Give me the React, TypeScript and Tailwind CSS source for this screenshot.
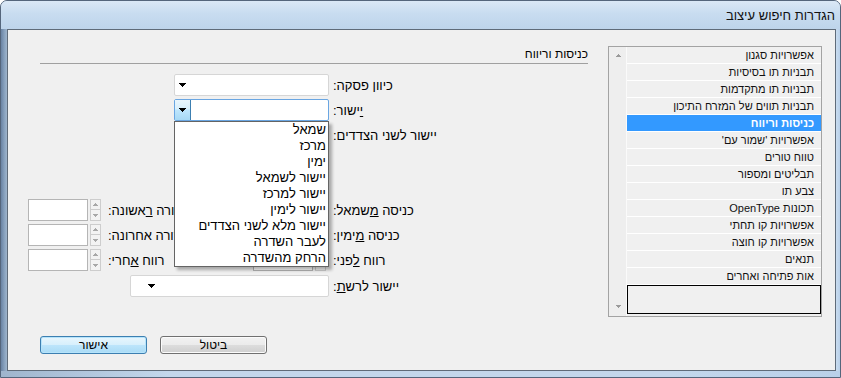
import React from "react";

function Arrow({ color = "#000" }: { color?: string }) {
  return (
    <svg width="7" height="4" viewBox="0 0 7 4" shapeRendering="crispEdges">
      <path d="M0 0h7v1H6v1H5v1H4v1H3V3H2V2H1V1H0z" fill={color} />
    </svg>
  );
}

function TinyArrow({ up = false, color = "#a8a8a8" }: { up?: boolean; color?: string }) {
  return (
    <svg width="5" height="3" viewBox="0 0 5 3" shapeRendering="crispEdges">
      {up ? (
        <path d="M2 0h1v1h1v1h1v1H0V2h1V1h1z" fill={color} />
      ) : (
        <path d="M0 0h5v1H4v1H3v1H2V2H1V1H0z" fill={color} />
      )}
    </svg>
  );
}

function Combo({ w, arrowPad = 4 }: { w: string; arrowPad?: number }) {
  return (
    <div
      className={`${w} h-[22px] shrink-0 border border-[#d6d6d6] rounded-[2px] bg-white flex items-center`}
    >
      <div className={arrowPad === 4 ? "pl-[4px] flex" : "pl-[17px] flex"}>
        <Arrow />
      </div>
    </div>
  );
}

function Spin() {
  return (
    <div className="w-[11px] h-[22px] shrink-0 flex flex-col">
      <div className="h-[11px] border border-[#cdcdcd] bg-[#f3f3f3] flex items-center justify-center">
        <TinyArrow up />
      </div>
      <div className="h-[11px] border border-t-0 border-[#cdcdcd] bg-[#f3f3f3] flex items-center justify-center">
        <TinyArrow />
      </div>
    </div>
  );
}

function SpinField() {
  return (
    <div className="flex items-center shrink-0">
      <div className="w-[60px] h-[22px] border border-[#b5b5b5] bg-white" />
      <div className="ml-[2px]">
        <Spin />
      </div>
    </div>
  );
}

function Label({ children }: { children: React.ReactNode }) {
  return (
    <span dir="rtl" className="text-[13px] leading-[16px] whitespace-nowrap">
      {children}
    </span>
  );
}

const listItems = [
  "אפשרויות סגנון",
  "תבניות תו בסיסיות",
  "תבניות תו מתקדמות",
  "תבניות תווים של המזרח התיכון",
  "כניסות וריווח",
  "אפשרויות 'שמור עם'",
  "טווח טורים",
  "תבליטים ומספור",
  "צבע תו",
  "תכונות OpenType",
  "אפשרויות קו תחתי",
  "אפשרויות קו חוצה",
  "תנאים",
  "אות פתיחה ואחרים",
];

const alignItems = [
  "שמאל",
  "מרכז",
  "ימין",
  "יישור לשמאל",
  "יישור למרכז",
  "יישור לימין",
  "יישור מלא לשני הצדדים",
  "לעבר השדרה",
  "הרחק מהשדרה",
];

export default function App() {
  return (
    <div className="w-[841px] h-[378px] overflow-hidden bg-white font-['Liberation_Sans',Arial,sans-serif] text-black">
      <div className="w-full h-full flex flex-col border border-[#55667c] rounded-t-[7px] bg-[#bcd2ea] overflow-hidden">
        {/* title bar */}
        <div className="h-[28px] shrink-0 flex items-center justify-end pr-[5px] bg-[linear-gradient(180deg,#dbe8f6_0%,#c8dcf0_45%,#bed4eb_100%)]">
          <span dir="rtl" className="text-[13px] leading-[16px] mt-[1px] text-[#111]">
            הגדרות חיפוש עיצוב
          </span>
        </div>

        <div className="flex h-[342px] shrink-0">
          <div className="w-[6px] shrink-0 bg-[linear-gradient(90deg,#6a83a3_0%,#8aa3bf_60%,#9fb4cb_100%)]" />

          {/* client */}
          <div className="w-[829px] h-[342px] shrink-0 border border-[#5f6b79] bg-[#f0f0f0] flex flex-col">
            <div className="flex pt-[16px] h-[287px] shrink-0">
              {/* form panel */}
              <div className="w-[600px] shrink-0 flex flex-col">
                <div className="ml-[32px] w-[548px] h-[18px] border-b border-[#a0a0a0] flex justify-end">
                  <span dir="rtl" className="text-[12px] leading-[16px] whitespace-nowrap">
                    כניסות וריווח
                  </span>
                </div>

                {/* Row A */}
                <div className="mt-[10px] h-[22px] flex items-center">
                  <div className="ml-[166px]">
                    <Combo w="w-[155px]" />
                  </div>
                  <div className="ml-[4px]">
                    <Label>כיוון פסקה:</Label>
                  </div>
                </div>

                {/* Row B (open) */}
                <div className="mt-[3px] h-[22px] flex items-center">
                  <div className="ml-[166px] relative w-[155px] h-[22px] border border-[#6aa6e2] rounded-[2px] bg-white flex">
                    <div className="w-[16px] h-full border-r border-[#3c7fb1] bg-[linear-gradient(180deg,#eaf6fd_0%,#d9f0fc_45%,#bee6fd_50%,#a7d9f5_100%)] flex items-center justify-center">
                      <Arrow />
                    </div>
                    <div className="absolute left-[-1px] top-[21px] w-[155px] h-[146px] z-20 border border-[#646464] bg-white shadow-[3px_3px_3px_rgba(0,0,0,0.3)] flex flex-col">
                      {alignItems.map((t) => (
                        <div
                          key={t}
                          dir="rtl"
                          className="h-[16px] leading-[16px] text-[13px] pr-[2px] text-right whitespace-nowrap"
                        >
                          {t}
                        </div>
                      ))}
                    </div>
                  </div>
                  <div className="ml-[4px]">
                    <Label>
                      <u>י</u>ישור:
                    </Label>
                  </div>
                </div>

                {/* Row C */}
                <div className="mt-[3px] h-[22px] flex items-center">
                  <div className="ml-[166px]">
                    <Combo w="w-[155px]" />
                  </div>
                  <div className="ml-[4px]">
                    <Label>יישור לשני הצדדים:</Label>
                  </div>
                </div>

                {/* Row D */}
                <div className="mt-[53px] h-[22px] flex items-center">
                  <div className="ml-[20px] w-[225px] shrink-0 flex items-center">
                    <SpinField />
                    <div className="ml-[7px]">
                      <Label>
                        כניסה לשורה <u>ר</u>אשונה:
                      </Label>
                    </div>
                  </div>
                  <SpinField />
                  <div className="ml-[7px]">
                    <Label>
                      כניסה <u>מ</u>שמאל:
                    </Label>
                  </div>
                </div>

                {/* Row E */}
                <div className="mt-[3px] h-[22px] flex items-center">
                  <div className="ml-[20px] w-[225px] shrink-0 flex items-center">
                    <SpinField />
                    <div className="ml-[7px]">
                      <Label>כניסה לשורה אחרונה:</Label>
                    </div>
                  </div>
                  <SpinField />
                  <div className="ml-[7px]">
                    <Label>
                      כניסה <u>מ</u>ימין:
                    </Label>
                  </div>
                </div>

                {/* Row F */}
                <div className="mt-[3px] h-[22px] flex items-center">
                  <div className="ml-[20px] w-[225px] shrink-0 flex items-center">
                    <SpinField />
                    <div className="ml-[7px]">
                      <Label>
                        רווח <u>א</u>חרי:
                      </Label>
                    </div>
                  </div>
                  <SpinField />
                  <div className="ml-[7px]">
                    <Label>
                      רווח <u>ל</u>פני:
                    </Label>
                  </div>
                </div>

                {/* Row G */}
                <div className="mt-[4px] h-[22px] flex items-center">
                  <div className="ml-[122px]">
                    <Combo w="w-[199px]" arrowPad={17} />
                  </div>
                  <div className="ml-[4px]">
                    <Label>
                      יישור לרש<u>ת</u>:
                    </Label>
                  </div>
                </div>
              </div>

              {/* category list */}
              <div className="w-[214px] h-[271px] shrink-0 border border-[#a3a3a3] flex">
                <div className="w-[18px] shrink-0 border-r border-[#fafafa] bg-[#eeeeee] flex flex-col justify-between pl-[7px] pt-[7px] pb-[8px]">
                  <TinyArrow up color="#9a9a9a" />
                  <TinyArrow color="#9a9a9a" />
                </div>
                <div className="w-[194px] shrink-0 flex flex-col bg-[#f0f0f0]">
                  {listItems.map((t, i) => (
                    <div
                      key={t}
                      dir="rtl"
                      className={
                        i === 4
                          ? "h-[17px] border-b border-white bg-[#3399ff] text-white font-bold text-[11px] leading-[16px] pr-[7px] text-right whitespace-nowrap"
                          : "h-[17px] border-b border-white text-[11px] leading-[16px] pr-[7px] text-right whitespace-nowrap text-[#111]"
                      }
                    >
                      {t}
                    </div>
                  ))}
                  <div className="h-[29px] border border-black bg-[#f0f0f0]" />
                </div>
              </div>
            </div>

            {/* buttons */}
            <div className="flex pl-[32px] mt-[19px]">
              <div className="w-[107px] h-[18px] rounded-[3px] border border-[#3c7fb1] bg-[linear-gradient(180deg,#e9f6fd_0%,#d6effc_50%,#bde5fb_50%,#a9dbf6_100%)] shadow-[inset_0_0_0_1px_#b6e4fb] flex items-center justify-center">
                <span dir="rtl" className="text-[12px] leading-[14px]">
                  אישור
                </span>
              </div>
              <div className="ml-[13px] w-[107px] h-[18px] rounded-[3px] border border-[#707070] bg-[linear-gradient(180deg,#f2f2f2_0%,#ebebeb_50%,#dddddd_50%,#cfcfcf_100%)] shadow-[inset_0_0_0_1px_#fbfbfb] flex items-center justify-center">
                <span dir="rtl" className="text-[12px] leading-[14px]">
                  ביטול
                </span>
              </div>
            </div>
          </div>

          <div className="w-[4px] shrink-0 bg-[linear-gradient(90deg,#c9dcef_0%,#b8cfe8_100%)]" />
        </div>

        <div className="h-[6px] shrink-0 bg-[linear-gradient(90deg,#9fb5cd_0%,#c3d7ec_20%,#c3d7ec_80%,#b9d0e9_100%)]" />
      </div>
    </div>
  );
}
